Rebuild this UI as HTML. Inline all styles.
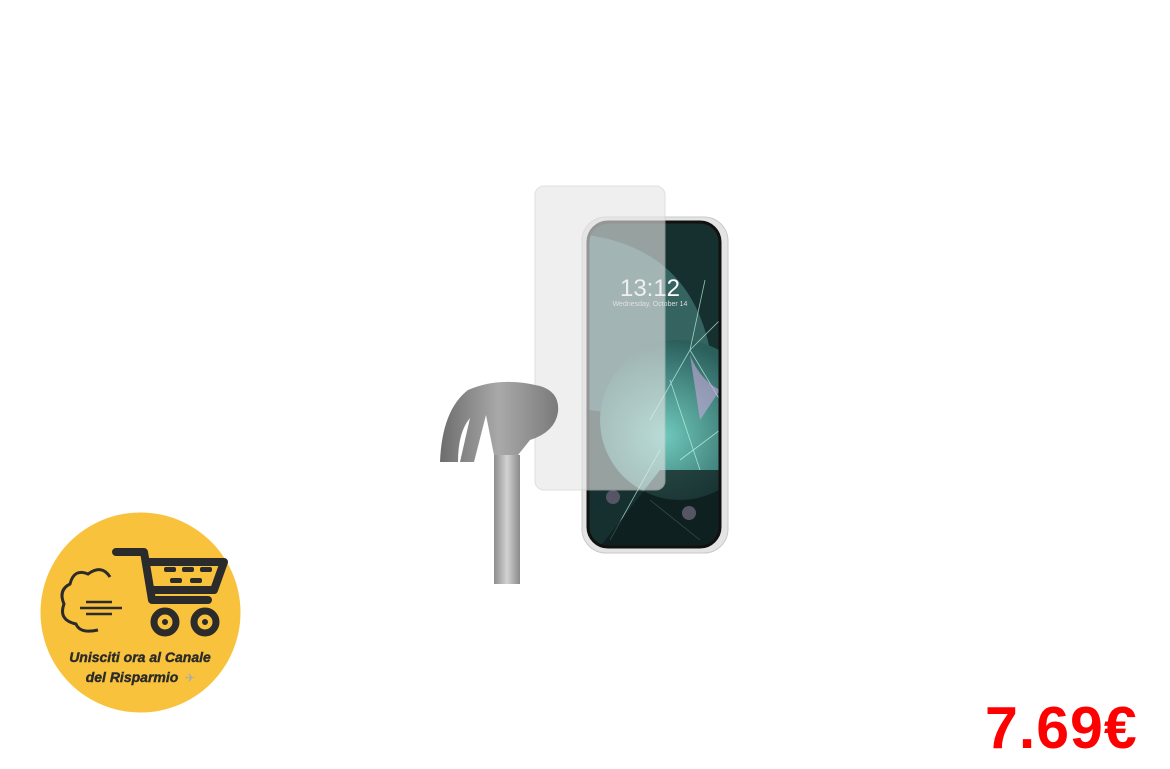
<!DOCTYPE html>
<html><head><style>
body{margin:0;width:1170px;height:769px;background:#fff;position:relative;overflow:hidden;font-family:"Liberation Sans",sans-serif}
.abs{position:absolute}
</style></head><body>
<svg class="abs" style="left:0;top:0" width="1170" height="769">
<defs>
<radialGradient id="g1" cx="0.4" cy="0.6" r="0.6"><stop offset="0" stop-color="#6fc9bd"/><stop offset="1" stop-color="#2b5f5c"/></radialGradient>
<linearGradient id="hm" x1="0" x2="1"><stop offset="0" stop-color="#6d6d6d"/><stop offset="0.5" stop-color="#a9a9a9"/><stop offset="1" stop-color="#7a7a7a"/></linearGradient>
<linearGradient id="hd" x1="0" x2="1"><stop offset="0" stop-color="#8d8d8d"/><stop offset="0.5" stop-color="#d2d2d2"/><stop offset="1" stop-color="#8a8a8a"/></linearGradient>
<clipPath id="sc"><rect x="588" y="222" width="132" height="325" rx="20"/></clipPath>
</defs>
<rect x="582" y="217" width="146" height="336" rx="24" fill="#e4e4e4" stroke="#c9c9c9"/>
<rect x="588" y="222" width="132" height="325" rx="20" fill="#16302f"/>
<g clip-path="url(#sc)">
<path d="M588 235 Q690 250 710 350 Q660 420 588 410 Z" fill="#3c706d" opacity="0.8"/>
<circle cx="680" cy="420" r="80" fill="url(#g1)"/>
<path d="M690 350 L720 320 M690 350 L650 420 M690 350 L720 400 M670 380 L700 470 M660 450 L610 540 M680 460 L720 430 M650 500 L700 540 M690 350 L705 280" stroke="#cfe" stroke-width="0.8" opacity="0.7"/>
<path d="M690 355 Q700 380 720 390 L700 420 Z" fill="#c9a8d8" opacity="0.6"/>
<path d="M660 470 L720 470 L720 547 L600 547 Z" fill="#0d1a1a" opacity="0.7"/>
</g>
<rect x="588" y="222" width="132" height="325" rx="20" fill="none" stroke="#111" stroke-width="3"/>
<text x="650" y="296" fill="#fff" font-size="24" text-anchor="middle">13:12</text>
<text x="650" y="306" fill="#ddd" font-size="7" text-anchor="middle">Wednesday, October 14</text>
<circle cx="613" cy="497" r="7" fill="#556"/><circle cx="689" cy="513" r="7" fill="#556"/>
<rect x="535" y="186" width="130" height="304" rx="9" fill="#e6e6e6" opacity="0.62" stroke="#ccc"/>
<rect x="494" y="455" width="26" height="129" fill="url(#hd)"/>
<path d="M440 462 Q442 410 468 390 Q500 376 540 386 Q560 392 558 412 Q555 432 530 440 L518 455 L494 455 L486 415 L474 462 L460 462 L470 418 Q458 432 458 462 Z" fill="url(#hm)"/>
</svg>
<svg class="abs" style="left:40px;top:512px" width="201" height="201">
<circle cx="100.5" cy="100.5" r="100" fill="#f9c23c"/>
<g fill="none" stroke="#2b2b2b" stroke-width="3">
<path d="M70 65 Q62 52 48 62 Q34 56 30 72 Q18 78 24 92 Q18 108 36 112 Q40 122 58 118"/>
</g>
<g stroke="#2b2b2b" stroke-width="2.5"><line x1="46" y1="90" x2="72" y2="90"/><line x1="40" y1="96" x2="82" y2="96"/><line x1="46" y1="102" x2="72" y2="102"/></g>
<g fill="none" stroke="#2b2b2b" stroke-width="8" stroke-linejoin="round" stroke-linecap="round">
<path d="M76 40 L104 40 L112 88 L168 88"/>
<path d="M108 50 L184 50 L174 78 L112 78"/>
</g>
<g fill="#2b2b2b"><rect x="124" y="55" width="12" height="5" rx="2"/><rect x="142" y="55" width="12" height="5" rx="2"/><rect x="160" y="55" width="12" height="5" rx="2"/><rect x="130" y="66" width="12" height="5" rx="2"/><rect x="150" y="66" width="12" height="5" rx="2"/></g>
<circle cx="125" cy="110" r="11" fill="none" stroke="#2b2b2b" stroke-width="7"/><circle cx="125" cy="110" r="3" fill="#2b2b2b"/>
<circle cx="165" cy="110" r="11" fill="none" stroke="#2b2b2b" stroke-width="7"/><circle cx="165" cy="110" r="3" fill="#2b2b2b"/>
<text x="100" y="150" text-anchor="middle" font-size="14" font-weight="bold" font-style="italic" fill="#2b2b2b" stroke="#2b2b2b" stroke-width="0.4">Unisciti ora al Canale</text>
<text x="92" y="170" text-anchor="middle" font-size="14" font-weight="bold" font-style="italic" fill="#2b2b2b" stroke="#2b2b2b" stroke-width="0.4">del Risparmio</text>
<text x="145" y="170" font-size="12" fill="#aaa">✈</text>
</svg>
<div class="abs" style="left:985px;top:694px;font-size:59px;font-weight:bold;color:#f00;letter-spacing:1px">7.69€</div>
</body></html>
